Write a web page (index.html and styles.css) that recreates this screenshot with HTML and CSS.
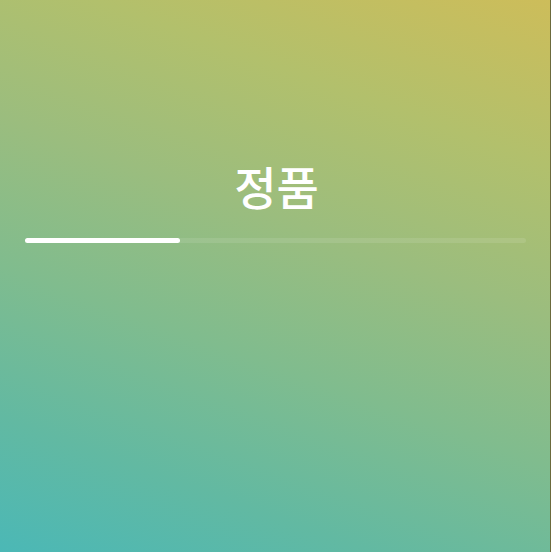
FILE: index.html
```html
<!DOCTYPE html>
<html lang="ko">
<head>
    <meta charset="UTF-8">
    <meta name="viewport" content="width=device-width, initial-scale=1.0">
    <title>정품</title>
    <link rel="stylesheet" href="styles.css">
</head>
<body>
    <div class="screen">
        <h1 class="title">정품</h1>
        <div class="progress">
            <div class="progress-fill" style="width: 31%"></div>
        </div>
    </div>
</body>
</html>
```

FILE: styles.css
```css
html, body {
    margin: 0;
    padding: 0;
}
body {
    font-family: "Noto Sans CJK KR", "Noto Sans", sans-serif;
}
.screen {
    width: 551px;
    height: 552px;
    border-right: 1px solid #6b6a3c;
    background: linear-gradient(200deg, #cdbd5a 0%, #b2c06c 22%, #9bbd7e 42%, #80bc8e 62%, #62b9a2 82%, #4bb8b6 100%);
    padding: 152px 24px 0 25px;
    box-sizing: border-box;
}
.title {
    margin: 0;
    text-align: center;
    font-size: 46px;
    font-weight: 500;
    line-height: 66px;
    color: #ffffff;
    padding-left: 2px;
}
.progress {
    margin-top: 20px;
    height: 5px;
    border-radius: 3px;
    background: rgba(255, 255, 255, 0.1);
}
.progress-fill {
    height: 100%;
    border-radius: 3px;
    background: #ffffff;
}
```
